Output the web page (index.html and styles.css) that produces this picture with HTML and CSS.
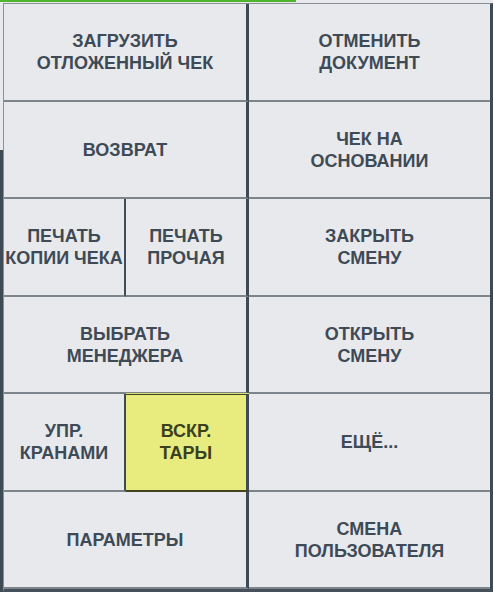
FILE: index.html
```html
<!DOCTYPE html>
<html lang="ru">
<head>
<meta charset="utf-8">
<title>Меню</title>
<link rel="stylesheet" href="styles.css">
</head>
<body>
<div class="screen">
  <div class="progress"></div>
  <div class="main">
    <div class="gutter"></div>
    <div class="grid">
      <div class="cell wide">ЗАГРУЗИТЬ<br>ОТЛОЖЕННЫЙ ЧЕК</div>
      <div class="cell right">ОТМЕНИТЬ<br>ДОКУМЕНТ</div>
      <div class="cell wide">ВОЗВРАТ</div>
      <div class="cell right">ЧЕК НА<br>ОСНОВАНИИ</div>
      <div class="cell half">ПЕЧАТЬ<br>КОПИИ ЧЕКА</div>
      <div class="cell mid">ПЕЧАТЬ<br>ПРОЧАЯ</div>
      <div class="cell right">ЗАКРЫТЬ<br>СМЕНУ</div>
      <div class="cell wide">ВЫБРАТЬ<br>МЕНЕДЖЕРА</div>
      <div class="cell right">ОТКРЫТЬ<br>СМЕНУ</div>
      <div class="cell half">УПР.<br>КРАНАМИ</div>
      <div class="cell mid hl">ВСКР.<br>ТАРЫ</div>
      <div class="cell right">ЕЩЁ...</div>
      <div class="cell wide">ПАРАМЕТРЫ</div>
      <div class="cell right">СМЕНА<br>ПОЛЬЗОВАТЕЛЯ</div>
    </div>
  </div>
</div>
</body>
</html>
```

FILE: styles.css
```css
html, body {
  margin: 0;
  padding: 0;
  background: #e8e9ec;
}

.screen {
  width: 493px;
  height: 592px;
  overflow: hidden;
  background: #e8e9ec;
  font-family: "Liberation Sans", Arial, sans-serif;
}

.progress {
  width: 296px;
  height: 2px;
  background: #4fb52c;
}

.main {
  display: flex;
  margin-top: 1px;
}

.gutter {
  width: 3px;
  flex: none;
  background: linear-gradient(to bottom, transparent 147px, #3e4a54 147px);
}

.grid {
  display: grid;
  grid-template-columns: 122px 123px 241px;
  grid-template-rows: 98px 97px 98px 97px 98px 97px;
  border-top: 1px solid #8a9096;
  border-left: 1px solid #8a9096;
  border-right: 3px solid #3e4a54;
  border-bottom: 3px solid #45505a;
}

.cell {
  box-sizing: border-box;
  display: flex;
  align-items: center;
  justify-content: center;
  text-align: center;
  font-weight: bold;
  font-size: 18px;
  line-height: 22px;
  color: #3e4a55;
  border-bottom: 2px solid #7d858c;
  white-space: nowrap;
}

.wide {
  grid-column: 1 / span 2;
  border-right: 3px solid #3e4a54;
}

.half {
  border-right: 2px solid #3e4a54;
}

.mid {
  border-right: 3px solid #3e4a54;
}

.right {
  grid-column: 3;
}

.hl {
  background: #e8ec7f;
  color: #3b4020;
  border-bottom-color: #41451f;
  box-shadow: inset 0 1px 0 #41451f, 0 -1px 0 #d9de78;
}
```
